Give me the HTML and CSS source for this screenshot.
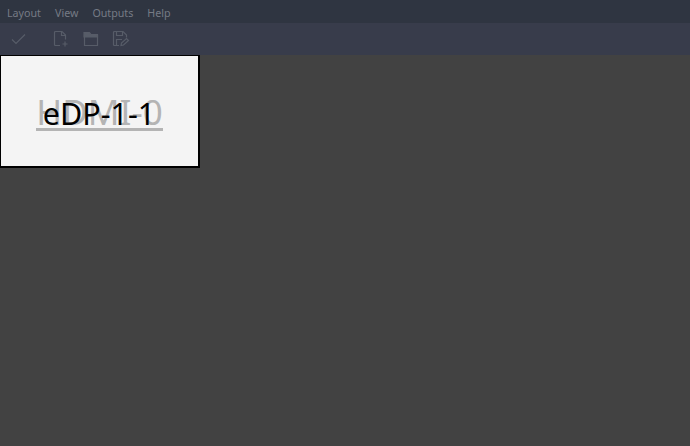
FILE: index.html
```html
<!doctype html>
<html lang="en">
<head>
    <meta charset="UTF-8">
    <title>Screen Layout Editor</title>
    <link rel="stylesheet" href="styles.css">
</head>
<body>
<div class="menubar">
    <span class="menu-item">Layout</span>
    <span class="menu-item">View</span>
    <span class="menu-item">Outputs</span>
    <span class="menu-item">Help</span>
</div>
<div class="toolbar">
    <svg class="tool tool-apply" width="18" height="18" viewBox="0 0 18 18" fill="none">
        <path d="M3 9.500 7 13.500 16 4.500"/>
    </svg>
    <svg class="tool tool-new" width="16" height="18" viewBox="0 0 16 18" fill="none">
        <path d="M7 15.500H2.500a1 1 0 0 1-1-1V2.500a1 1 0 0 1 1-1H9L12.500 5V9.500"/>
        <path d="M8.500 1.500V5.500H12.500"/>
        <path d="M12 11.500V16.500M9.500 14H14.500"/>
    </svg>
    <svg class="tool tool-open" width="16" height="18" viewBox="0 0 16 18" fill="none">
        <path class="solid" d="M1 2.500H6.500L8 4.500H14.500V7H1Z"/>
        <path d="M1.500 5V15.500H14.500V5"/>
    </svg>
    <svg class="tool tool-save" width="18" height="18" viewBox="0 0 18 18" fill="none">
        <path d="M7 15.500H2.500a1 1 0 0 1-1-1V2.500a1 1 0 0 1 1-1H11L14.500 5V7.500"/>
        <path d="M4.500 1.500V5.500H10.500V1.500"/>
        <path d="M4.500 15V9.500H10"/>
        <path d="M9 15.500 9.500 13 14.500 8.500 16.500 10.500 11.500 15Z"/>
    </svg>
</div>
<div class="canvas">
    <div class="output">
        <span class="label label-hdmi">HDMI-0</span>
        <span class="label label-edp">eDP-1-1</span>
    </div>
</div>
</body>
</html>
```

FILE: styles.css
```css
html, body {
    margin: 0;
    height: 100%;
}

body {
    display: flex;
    flex-direction: column;
    width: 690px;
    height: 446px;
    overflow: hidden;
    background-color: #424242;
    font-family: "Noto Sans", "Open Sans", sans-serif;
}

.menubar {
    display: flex;
    align-items: center;
    gap: 14px;
    height: 23px;
    padding: 2px 0 0 7px;
    box-sizing: border-box;
    background-color: #2f3541;
}

.menu-item {
    font-size: 10.7px;
    color: #767b85;
}

.toolbar {
    display: flex;
    align-items: center;
    height: 32px;
    padding-left: 9px;
    box-sizing: border-box;
    background-color: #383c4b;
}

.tool path {
    stroke: #575c68;
    stroke-width: 1.2;
}

.tool .solid {
    fill: #575c68;
}

.tool-new {
    margin-left: 26px;
}

.tool-open {
    margin-left: 14px;
}

.tool-save {
    margin-left: 13px;
}

.canvas {
    position: relative;
    flex: 1;
}

.output {
    position: absolute;
    top: 0;
    left: 0;
    width: 200px;
    height: 113px;
    box-sizing: border-box;
    border: 1px solid #000;
    border-width: 1px 2px 2px 1px;
    background-color: #f4f4f4;
}

.label {
    position: absolute;
    white-space: nowrap;
    text-align: center;
}

/* the two outputs are mirrored, so their names sit on top of each other */
.label-hdmi {
    top: 35px;
    left: 35px;
    width: 127px;
    height: 37px;
    font-size: 35px;
    line-height: 41px;
    color: #b4b4b4;
    border-bottom: 3px solid #b4b4b4;
}

.label-edp {
    top: 37px;
    left: 0;
    right: 1px;
    font-size: 30.5px;
    line-height: 41px;
    color: #000;
}
```
